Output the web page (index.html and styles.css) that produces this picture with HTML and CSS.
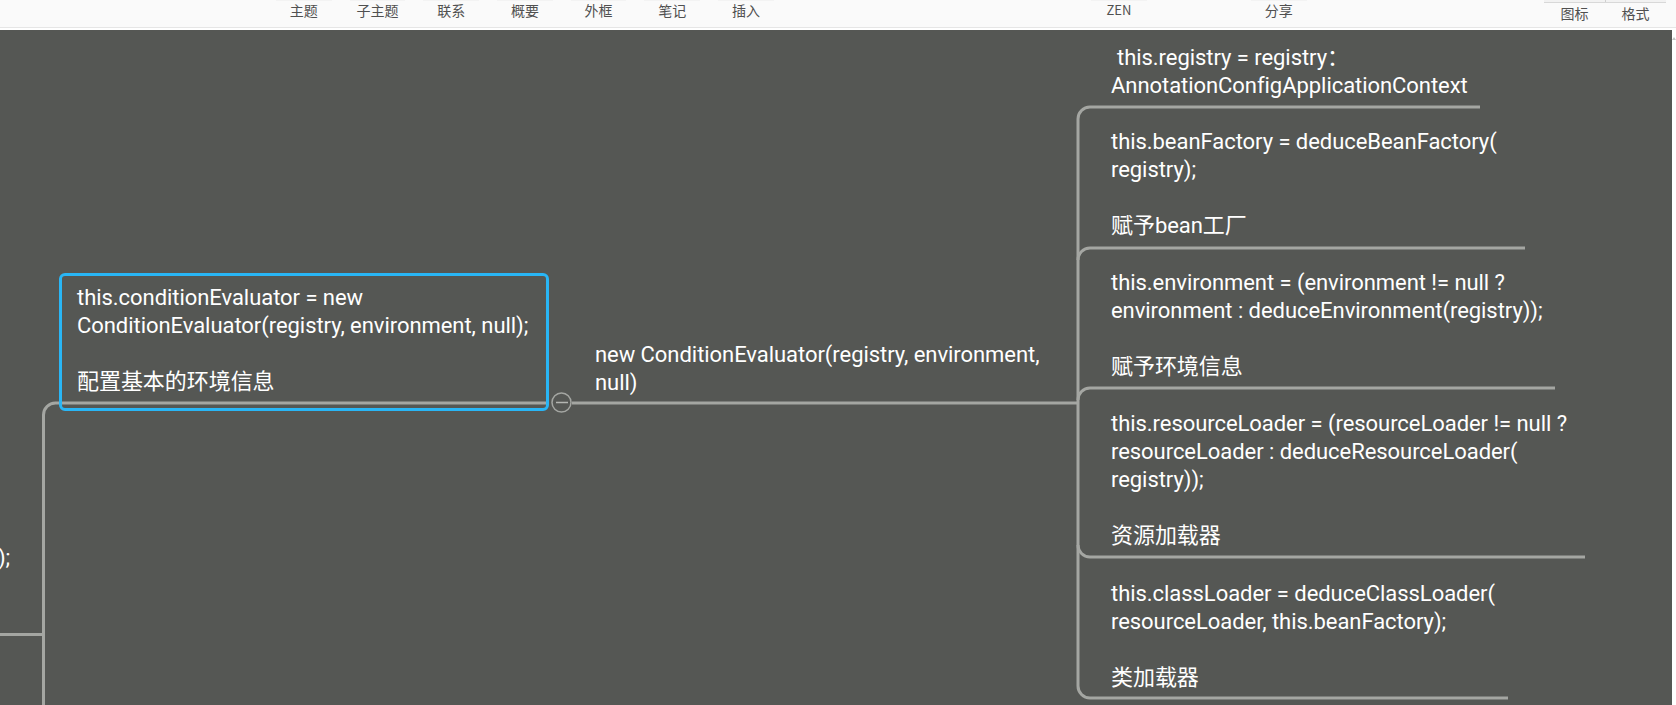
FILE: index.html
```html
<!DOCTYPE html>
<html lang="zh-CN">
<head>
<meta charset="utf-8">
<title>思维导图</title>
<link rel="stylesheet" href="styles.css">
</head>
<body>
<header class="toolbar">
  <nav class="tools">
    <span class="tool">主题</span><span class="tool">子主题</span><span class="tool">联系</span><span class="tool">概要</span><span class="tool">外框</span><span class="tool">笔记</span><span class="tool">插入</span>
  </nav>
  <span class="tool zen">ZEN</span>
  <span class="tool share">分享</span>
  <div class="panel-tabs"><span class="tab">图标</span><span class="tab">格式</span></div>
</header>
<main class="canvas">
  <svg class="links" width="1672" height="675" viewBox="0 30 1672 675" fill="none">
    <path class="link" d="M0 634.5H43.5"/>
    <path class="link" d="M43.5 705V415a12 12 0 0 1 12-12H548"/>
    <path class="link" d="M572 403H1077.5"/>
    <path class="link" d="M1480 107H1090a12 12 0 0 0-12 12V686a12 12 0 0 0 12 12H1508"/>
    <path class="link" d="M1525 248H1090a12 12 0 0 0-12 12"/>
    <path class="link" d="M1555 388H1090a12 12 0 0 0-12 12"/>
    <path class="link" d="M1585 557H1090a12 12 0 0 1-12-12"/>
    <circle class="fold" cx="561.5" cy="402.5" r="9.5"/>
    <path class="fold-bar" d="M556 402.5H568"/>
  </svg>
  <div class="topic stub">);</div>
  <div class="topic selected">this.conditionEvaluator = new<br>ConditionEvaluator(registry, environment, null);<br><br>配置基本的环境信息</div>
  <div class="topic middle">new ConditionEvaluator(registry, environment,<br>null)</div>
  <div class="topic t1"><span class="indent">this.registry = registry：</span><br>AnnotationConfigApplicationContext</div>
  <div class="topic t2">this.beanFactory = deduceBeanFactory(<br>registry);<br><br>赋予bean工厂</div>
  <div class="topic t3">this.environment = (environment != null ?<br>environment : deduceEnvironment(registry));<br><br>赋予环境信息</div>
  <div class="topic t4">this.resourceLoader = (resourceLoader != null ?<br>resourceLoader : deduceResourceLoader(<br>registry));<br><br>资源加载器</div>
  <div class="topic t5">this.classLoader = deduceClassLoader(<br>resourceLoader, this.beanFactory);<br><br>类加载器</div>
</main>
<span class="scroll-arrow"></span>
</body>
</html>
```
FILE: styles.css
```css
* { box-sizing: border-box; }
html, body { margin: 0; height: 705px; overflow: hidden; }
body { position: relative; font-family: "Noto Sans CJK SC", "Liberation Sans", sans-serif; background: #fff; }

.toolbar {
  position: relative;
  height: 30px;
  background: #fafafa;
  border-bottom: 2px solid #fff;
  box-shadow: inset 0 -1px 0 #e6e6e6;
  font-size: 14px;
  color: #505050;
}
.tools { display: flex; padding-left: 267px; }
.tool { position: relative; display: block; width: 73.7px; text-align: center; line-height: 20px; }
.tool::before {
  content: "";
  position: absolute;
  left: 9px; right: 9px; top: 0;
  height: 1px;
  background: #f3f3f3;
}
.zen { position: absolute; left: 1082px; top: 0; font-size: 13px; }
.share { position: absolute; left: 1242px; top: 0; }
.panel-tabs {
  position: absolute;
  left: 1543px; top: 0;
  display: flex;
  padding-left: 1px;
}
.panel-tabs::before {
  content: "";
  position: absolute;
  left: 1px; top: 0;
  width: 122px; height: 2px;
  background: linear-gradient(to right, #f2f2f2 61px, #cfcfcf 61px, #cfcfcf 62px, #f2f2f2 62px);
  border-bottom: 1px solid #d8d8d8;
}
.tab { width: 61px; text-align: center; line-height: 27px; }

.canvas { position: relative; height: 675px; background: #555754; overflow: hidden; margin-right: 4px; }
.links { position: absolute; left: 0; top: 0; }
.link { stroke: #a4a6a2; stroke-width: 3; }
.fold { stroke: #a4a6a2; stroke-width: 1.5; fill: #555754; }
.fold-bar { stroke: #b4b6b2; stroke-width: 1.5; }
.scroll-arrow {
  position: absolute;
  right: 0; top: 37px;
  border-left: 2px solid transparent;
  border-right: 2px solid transparent;
  border-bottom: 3px solid #c4c4c4;
}

.topic {
  position: absolute;
  font-family: Roboto, "Noto Sans CJK SC", sans-serif;
  font-size: 22px;
  line-height: 28px;
  letter-spacing: -0.05px;
  color: #fff;
  white-space: nowrap;
}
.indent { padding-left: 6px; }
.stub { left: -2px; top: 514px; }
.selected {
  left: 59px; top: 243px; width: 490px; height: 138px;
  padding: 8px 15px; border: 3px solid #29b6f6; border-radius: 6px;
}
.middle { left: 595px; top: 311px; }
.t1 { left: 1111px; top: 14px; }
.t2 { left: 1111px; top: 98px; }
.t3 { left: 1111px; top: 239px; }
.t4 { left: 1111px; top: 380px; }
.t5 { left: 1111px; top: 550px; }
```
